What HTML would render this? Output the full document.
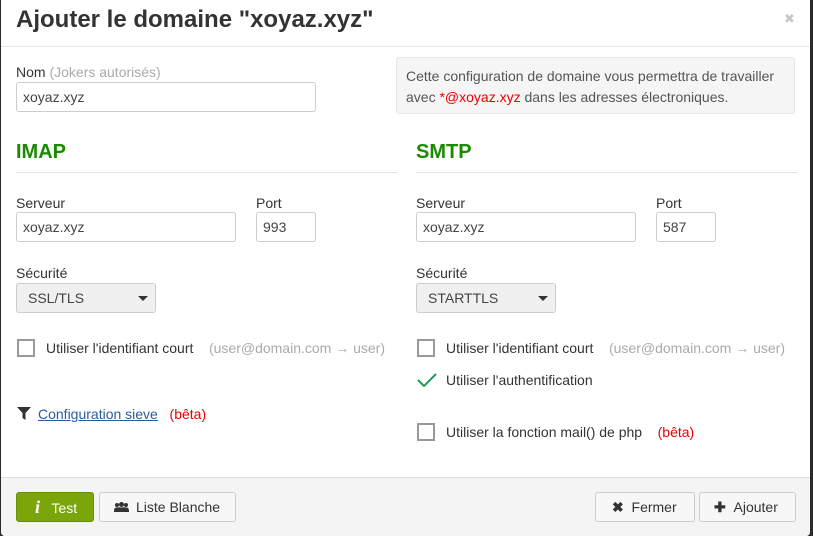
<!DOCTYPE html>
<html><head><meta charset="utf-8"><style>
*{box-sizing:border-box}
body{margin:0;width:813px;height:536px;overflow:hidden;background:#2b2b2b;font-family:"Liberation Sans",sans-serif;font-size:14px;color:#333;position:relative}
.dlg{position:absolute;left:1px;top:0;width:809px;height:536px;background:#fff;border-radius:0 0 4px 4px;overflow:hidden}
.a{position:absolute;white-space:nowrap}
.inp{position:absolute;border:1px solid #ccc;border-radius:3px;background:#fff;padding:0 6px;line-height:28px;font-size:14px;color:#444}
.sel{position:absolute;border:1px solid #ccc;border-radius:3px;background:#f0f0f0;padding:0 11px;line-height:28px;font-size:14px;color:#444}
.sel:after{content:"";position:absolute;right:7px;top:12px;border:5px solid transparent;border-top:5px solid #333;border-bottom:0}
.cb{position:absolute;width:18px;height:18px;border:2px solid #999;}
h2{position:absolute;margin:0;font-size:20px;color:#1a8a00;font-weight:bold}
.hr{position:absolute;height:1px;background:#e3e3e3}
.g{color:#aaa}.r{color:#e00}
.btn{position:absolute;top:492px;height:30px;border:1px solid #ccc;border-radius:3px;background:#f7f7f7;line-height:28px;font-size:14px;color:#333;padding-left:14px}
</style></head><body>
<div class="dlg">
<div class="a" style="left:15px;top:6px;font-size:24px;font-weight:bold;color:#333">Ajouter le domaine "xoyaz.xyz"</div>
<div class="a" style="left:783px;top:11px;font-size:13px;color:#c8c8c8">✖</div>
<div class="hr" style="left:0;top:46px;width:809px;background:#e8e8e8"></div>

<div class="a" style="left:15px;top:64px">Nom <span class="g">(Jokers autorisés)</span></div>
<div class="inp" style="left:15px;top:82px;width:300px;height:30px">xoyaz.xyz</div>
<div class="a" style="left:395px;top:57px;width:399px;height:57px;background:#f5f5f5;border:1px solid #e6e6e6;border-radius:3px;padding:8px 9px;white-space:normal;line-height:21px;font-size:14px;color:#555">Cette configuration de domaine vous permettra de travailler avec <span class="r">*@xoyaz.xyz</span> dans les adresses électroniques.</div>

<h2 style="left:15px;top:141px">IMAP</h2>
<div class="hr" style="left:15px;top:172px;width:381px"></div>
<div class="a" style="left:15px;top:195px">Serveur</div>
<div class="a" style="left:255px;top:195px">Port</div>
<div class="inp" style="left:15px;top:212px;width:220px;height:30px">xoyaz.xyz</div>
<div class="inp" style="left:255px;top:212px;width:60px;height:30px">993</div>
<div class="a" style="left:15px;top:265px">Sécurité</div>
<div class="sel" style="left:15px;top:283px;width:140px;height:30px">SSL/TLS</div>
<div class="cb" style="left:16px;top:339px"></div>
<div class="a" style="left:45px;top:340px">Utiliser l'identifiant court &nbsp;&nbsp; <span class="g">(user@domain.com → user)</span></div>
<svg class="a" style="left:16px;top:407px" width="14" height="13" viewBox="0 0 14 13"><path d="M0 0H14L8.5 6V13L5.5 11V6Z" fill="#333"/></svg>
<div class="a" style="left:37px;top:406px"><span style="color:#2a5d9c;text-decoration:underline">Configuration sieve</span> &nbsp; <span class="r">(bêta)</span></div>

<h2 style="left:415px;top:141px">SMTP</h2>
<div class="hr" style="left:415px;top:172px;width:381px"></div>
<div class="a" style="left:415px;top:195px">Serveur</div>
<div class="a" style="left:655px;top:195px">Port</div>
<div class="inp" style="left:415px;top:212px;width:220px;height:30px">xoyaz.xyz</div>
<div class="inp" style="left:655px;top:212px;width:60px;height:30px">587</div>
<div class="a" style="left:415px;top:265px">Sécurité</div>
<div class="sel" style="left:415px;top:283px;width:140px;height:30px">STARTTLS</div>
<div class="cb" style="left:416px;top:339px"></div>
<div class="a" style="left:445px;top:340px">Utiliser l'identifiant court &nbsp;&nbsp; <span class="g">(user@domain.com → user)</span></div>
<svg class="a" style="left:416px;top:373px" width="20" height="14" viewBox="0 0 20 14"><path d="M1 7L7 13L19 1" stroke="#1e9a5a" stroke-width="2" fill="none"/></svg>
<div class="a" style="left:445px;top:372px">Utiliser l'authentification</div>
<div class="cb" style="left:416px;top:423px"></div>
<div class="a" style="left:445px;top:424px">Utiliser la fonction mail() de php &nbsp;&nbsp; <span class="r">(bêta)</span></div>

<div style="position:absolute;left:0;top:477px;width:809px;height:59px;background:#f4f4f4;border-top:1px solid #ddd"></div>
<div class="btn" style="left:15px;width:78px;background:#7ba60a;border-color:#6a8f08;color:#fff;padding-left:18px"><i style="font-family:'Liberation Serif',serif;font-weight:bold;font-size:18px">i</i> &nbsp; Test</div>
<div class="btn" style="left:98px;width:137px;padding-left:36px"><svg style="position:absolute;left:14px;top:9px" width="15" height="11" viewBox="0 0 15 11"><circle cx="3" cy="3" r="2" fill="#333"/><circle cx="12" cy="3" r="2" fill="#333"/><circle cx="7.5" cy="2.5" r="2.5" fill="#333"/><path d="M0 9Q0 5 3 5.5 5 5 7.5 5.5 10 5 12 5.5 15 5 15 9V10H0Z" fill="#333"/></svg>Liste Blanche</div>
<div class="btn" style="left:594px;width:100px;padding-left:16px"><b>✖</b> &nbsp;Fermer</div>
<div class="btn" style="left:698px;width:97px;padding-left:14px"><b>✚</b> &nbsp;Ajouter</div>
</div>
</body></html>
